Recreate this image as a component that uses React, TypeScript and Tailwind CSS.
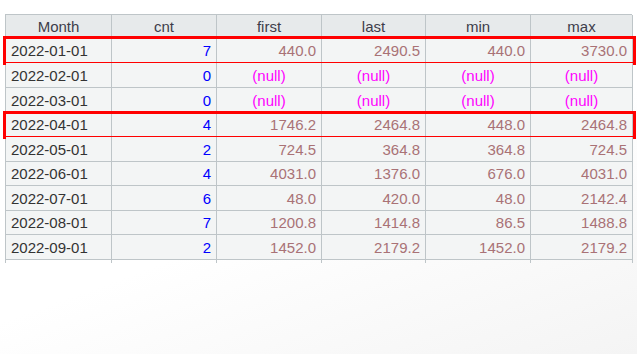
import React from "react";

type Row = { m: string; c: number; v: (string | null)[]; h: string; box?: boolean };

const rows: Row[] = [
  { m: "2022-01-01", c: 7, v: ["440.0", "2490.5", "440.0", "3730.0"], h: "h-[25px]", box: true },
  { m: "2022-02-01", c: 0, v: [null, null, null, null], h: "h-[25px]" },
  { m: "2022-03-01", c: 0, v: [null, null, null, null], h: "h-[25px]" },
  { m: "2022-04-01", c: 4, v: ["1746.2", "2464.8", "448.0", "2464.8"], h: "h-[24px]", box: true },
  { m: "2022-05-01", c: 2, v: ["724.5", "364.8", "364.8", "724.5"], h: "h-[25px]" },
  { m: "2022-06-01", c: 4, v: ["4031.0", "1376.0", "676.0", "4031.0"], h: "h-[24px]" },
  { m: "2022-07-01", c: 6, v: ["48.0", "420.0", "48.0", "2142.4"], h: "h-[25px]" },
  { m: "2022-08-01", c: 7, v: ["1200.8", "1414.8", "86.5", "1488.8"], h: "h-[24px]" },
  { m: "2022-09-01", c: 2, v: ["1452.0", "2179.2", "1452.0", "2179.2"], h: "h-[25px]" },
];

const widths = ["w-[106px]", "w-[105px]", "w-[105px]", "w-[104px]", "w-[105px]", "w-[102px]"];
const headers = ["Month", "cnt", "first", "last", "min", "max"];

export default function App() {
  return (
    <div
      className="w-[637px] h-[354px] overflow-hidden bg-[linear-gradient(160deg,#ffffff_55%,#f4f4f4_100%)] pt-[14px] pl-[5px]"
      style={{ fontFamily: '"Liberation Sans", Arial, sans-serif' }}
    >
      <div className="w-[627px] border-l border-t border-[#bec5c8] text-[15px] leading-none">
        <div className="flex h-[23px] bg-[#e7eaeb]">
          {headers.map((h, i) => (
            <div
              key={h}
              className={`${widths[i]} shrink-0 flex items-center justify-center border-r border-b border-[#bec5c8] text-[#3d3d4a]`}
            >
              {h}
            </div>
          ))}
        </div>
        {rows.map((r) => (
          <div key={r.m} className={`relative flex ${r.h} bg-[#f3f5f5]`}>
            <div className={`${widths[0]} shrink-0 flex items-center pl-[5px] border-r border-b border-[#bec5c8] text-[#333333]`}>
              {r.m}
            </div>
            <div className={`${widths[1]} shrink-0 flex items-center justify-end pr-[5px] border-r border-b border-[#bec5c8] text-[#0000ff]`}>
              {r.c}
            </div>
            {r.v.map((v, i) => (
              <div
                key={i}
                className={`${widths[i + 2]} shrink-0 flex items-center border-r border-b border-[#bec5c8] ${
                  v === null ? "justify-center text-[#ff00ff]" : "justify-end pr-[5px] text-[#a97276]"
                }`}
              >
                {v === null ? "(null)" : v}
              </div>
            ))}
            {r.box && (
              <div className="absolute -left-[3px] -right-[4px] -top-[2px] -bottom-[2px] border-[3px] border-[#ff0000] pointer-events-none" />
            )}
          </div>
        ))}
        <div className="flex h-[3px]">
          {widths.map((w, i) => (
            <div key={i} className={`${w} shrink-0 border-r border-[#bec5c8]`} />
          ))}
        </div>
      </div>
    </div>
  );
}
